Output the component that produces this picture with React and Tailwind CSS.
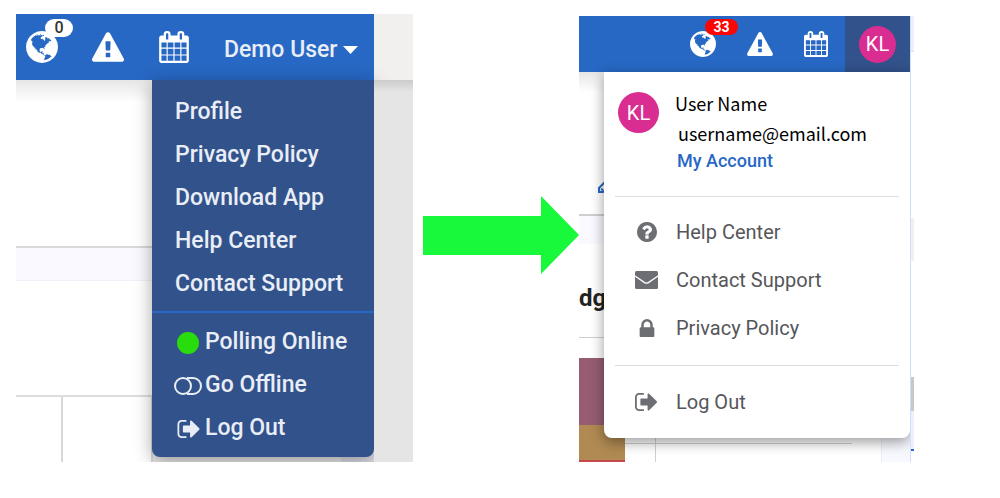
const GlobeIcon = ({ className }) => (
  <svg className={className} viewBox="128 128 1536 1536" fill="currentColor" aria-hidden="true">
    <path d="M896 128q209 0 385.5 103t279.5 279.5 103 385.5-103 385.5-279.5 279.5-385.5 103-385.5-103-279.5-279.5-103-385.5 103-385.5 279.5-279.5 385.5-103zm274 521q-2 1-9.5 9.5t-13.5 9.5q2 0 4.5-5t5-11 3.5-7q6-7 22-15 14-6 52-12 34-8 51 11-2-2 9.5-13t14.5-12q3-2 15-4.5t15-7.5l2-22q-12 1-17.5-7t-6.5-21q0 2-6 8 0-7-4.500-8t-11.5 1-9 1q-10-3-15-7.500t-8-16.500-4-15q-2-5-9.500-11t-9.500-10q-1-2-2.500-5.500t-3-6.500-4-5.500-5.500-2.500-7 5-7.500 10-4.500 5q-3-2-6-1.500t-4.500 1-4.500 3-5 3.500q-3 2-8.500 3t-8.500 2q15-5-1-11-10-4-16-3 9-4 7.500-12t-8.500-14h5q-1-4-8.500-8.500t-17.500-8.500-13-6q-8-5-34-9.500t-33-.5q-5 6-4.500 10.500t4 14 3.500 12.500q1 6-5.500 13t-6.500 12q0 7 14 15.500t10 21.500q-3 8-16 16t-16 12q-5 8-1.500 18.500t10.500 16.500q2 2 1.500 4t-3.500 4.500-5.500 4-6.500 3.500l-3 2q-11 5-20.500-6t-13.500-26q-7-25-16-30-23-8-29 1-5-13-41-26-25-9-58-4 6-1 0-15-7-15-19-12 3-6 4-17.500t1-13.500q3-13 12-23 1-1 7-8.500t9.500-13.500.5-6q35 4 50-11 5-5 11.500-17t10.500-17q9-6 14-5.500t14.500 5.500 14.500 5q14 1 15.500-11t-7.500-20q12 1 3-17-4-7-8-9-12-4-27 5-8 4 2 8-1-1-9.500 10.500t-16.500 17.500-16-5q-1-1-5.500-13.500t-9.500-13.500q-8 0-16 15 3-8-11-15t-24-8q19-12-8-27-7-4-20.500-5t-19.500 4q-5 7-5.500 11.500t5 8 10.500 5.500 11.500 4 8.500 3q14 10 8 14-2 1-8.500 3.500t-11.500 4.500-6 4q-3 4 0 14t-2 14q-5-5-9-17.500t-7-16.500q7 9-25 6l-10-1q-4 0-16 2t-20.500 1-13.500-8q-4-8 0-20 1-4 4-2-4-3-11-9.500t-10-8.500q-46 15-94 41 6 1 12-1 5-2 13-6.500t10-5.500q34-14 42-7l5-5q14 16 20 25-7-4-30-1-20 6-22 12 7 12 5 18-4-3-11.500-10t-14.500-11-15-5q-16 0-22 1-146 80-235 222 7 7 12 8 4 1 5 9t2.500 11 11.500-3q9 8 3 19 1-1 44 27 19 17 21 21 3 11-10 18-1-2-9-9t-9-4q-3 5 .5 18.500t10.500 12.500q-7 0-9.500 16t-2.500 35.500-1 23.500l2 1q-3 12 5.500 34.500t21.500 19.500q-13 3 20 43 6 8 8 9 3 2 12 7.500t15 10 10 10.500q4 5 10 22.500t14 23.500q-2 6 9.500 20t10.500 23q-1 0-2.500 1t-2.500 1q3 7 15.500 14t15.500 13q1 3 2 10t3 11 8 2q2-20-24-62-15-25-17-29-3-5-5.500-15.500t-4.500-14.500q2 0 6 1.500t8.500 3.500 7.500 4 2 3q-3 7 2 17.500t12 18.500 17 19 12 13q6 6 14 19.500t0 13.500q9 0 20 10t17 20q5 8 8 26t5 24q2 7 8.500 13.500t12.500 9.500l16 8 13 7q5 2 18.500 10.500t21.500 11.500q10 4 16 4t14.500-2.500 13.500-3.500q15-2 29 15t21 21q36 19 55 11-2 1 .5 7.500t8 15.500 9 14.500 5.500 8.500q5 6 18 15t18 15q6-4 7-9-3 8 7 20t18 10q14-3 14-32-31 15-49-18 0-1-2.500-5.500t-4-8.500-2.500-8.500 0-7.500 5-3q9 0 10-3.500t-2-12.500-4-13q-1-8-11-20t-12-15q-5 9-16 8t-16-9q0 1-1.500 5.500t-1.500 6.500q-13 0-15-1 1-3 2.500-17.500t3.500-22.500q1-4 5.500-12t7.500-14.500 4-12.500-4.500-9.500-17.500-2.500q-19 1-26 20-1 3-3 10.500t-5 11.500-9 7q-7 3-24 2t-24-5q-13-8-22.500-29t-9.500-37q0-10 2.500-26.500t3-25-5.500-24.500q3-2 9-9.500t10-10.500q2-1 4.500-1.500t4.500 0 4-1.500 3-6q-1-1-4-3-3-3-4-3 7 3 28.500-1.500t27.500 1.500q15 11 22-2 0-1-2.500-9.500t-.5-13.500q5 27 29 9 3 3 15.500 5t17.500 5q3 2 7 5.500t5.500 4.500 5-.5 8.500-6.500q10 14 12 24 11 40 19 44 7 3 11 2t4.500-9.500 0-14-1.500-12.500l-1-8v-18l-1-8q-15-3-18.500-12t1.500-18.500 15-18.500q1-1 8-3.500t15.500-6.500 12.500-8q21-19 15-35 7 0 11-9-1 0-5-3t-7.500-5-4.500-2q9-5 2-16 5-3 7.500-11t7.500-10q9 12 21 2 7-8 1-16 5-7 20.500-10.500t18.500-9.500q7 2 8-2t1-12 3-12q4-5 15-9t13-5l17-11q3-4 0-4 18 2 31-11 10-11-6-20 3-6-3-9.500t-15-5.500q3-1 11.500-.5t10.500-1.500q15-10-7-16-17-5-43 12zm-163 877q206-36 351-189-3-3-12.500-4.500t-12.500-3.500q-18-7-24-8 1-7-2.500-13t-8-9-12.500-8-11-7q-2-2-7-6t-7-5.500-7.500-4.500-8.500-2-10 1l-3 1q-3 1-5.500 2.500t-5.500 3-4 3 0 2.500q-21-17-36-22-5-1-11-5.500t-10.500-7-10-1.500-11.500 7q-5 5-6 15t-2 13q-7-5 0-17.500t2-18.500q-3-6-10.500-4.500t-12 4.500-11.500 8.500-9 6.500-8.500 5.500-8.500 7.500q-3 4-6 12t-5 11q-2-4-11.500-6.500t-9.500-5.500q2 10 4 35t5 38q7 31-12 48-27 25-29 40-4 22 12 26 0 7-8 20.500t-7 21.500q0 6 2 16z" />
  </svg>
);

const WarningIcon = ({ className }) => (
  <svg className={className} viewBox="0 0 1792 1664" fill="currentColor" aria-hidden="true">
    <path d="M1024 1375v-190q0-14-9.5-23.5t-22.5-9.5h-192q-13 0-22.5 9.5t-9.5 23.5v190q0 14 9.5 23.5t22.5 9.5h192q13 0 22.5-9.5t9.5-23.5zm-2-374l18-459q0-12-10-19-13-11-24-11h-220q-11 0-24 11-10 7-10 21l17 457q0 10 10 16.5t24 6.5h185q14 0 23.5-6.5t10.5-16.5zm-14-934l768 1408q35 63-2 126-17 29-46.5 46t-63.5 17h-1536q-34 0-63.5-17t-46.5-46q-37-63-2-126l768-1408q17-31 47-49t65-18 65 18 47 49z" />
  </svg>
);

const CalendarIcon = ({ className }) => (
  <svg className={className} viewBox="64 0 1664 1792" fill="currentColor" aria-hidden="true">
    <path d="M192 1664h288v-288h-288v288zm352 0h320v-288h-320v288zm-352-352h288v-320h-288v320zm352 0h320v-320h-320v320zm-352-384h288v-288h-288v288zm736 736h320v-288h-320v288zm-384-736h320v-288h-320v288zm768 736h288v-288h-288v288zm-384-352h320v-320h-320v320zm-352-864v-288q0-13-9.5-22.5t-22.5-9.5h-64q-13 0-22.5 9.5t-9.5 22.5v288q0 13 9.5 22.5t22.5 9.5h64q13 0 22.5-9.5t9.5-22.5zm736 864h288v-320h-288v320zm-384-384h320v-288h-320v288zm384 0h288v-288h-288v288zm32-480v-288q0-13-9.5-22.5t-22.5-9.5h-64q-13 0-22.5 9.5t-9.5 22.5v288q0 13 9.5 22.5t22.5 9.5h64q13 0 22.5-9.5t9.5-22.5zm384-64v1280q0 52-38 90t-90 38h-1408q-52 0-90-38t-38-90v-1280q0-52 38-90t90-38h128v-96q0-66 47-113t113-47h64q66 0 113 47t47 113v96h384v-96q0-66 47-113t113-47h64q66 0 113 47t47 113v96h128q52 0 90 38t38 90z" />
  </svg>
);

const SignOutIcon = ({ className }) => (
  <svg className={className} viewBox="64 256 1568 1280" fill="currentColor" aria-hidden="true">
    <path d="M704 1440q0 4 1 20t.5 26.5-3 23.5-10 19.5-20.5 6.5h-320q-119 0-203.5-84.5t-84.5-203.5v-704q0-119 84.5-203.5t203.5-84.5h320q13 0 22.5 9.5t9.5 22.5q0 4 1 20t.5 26.5-3 23.5-10 19.5-20.5 6.5h-320q-66 0-113 47t-47 113v704q0 66 47 113t113 47h312l11.5 1 11.5 3 8 5.5 7 9 2 13.5zm928-544q0 26-19 45l-544 544q-19 19-45 19t-45-19-19-45v-288h-448q-26 0-45-19t-19-45v-384q0-26 19-45t45-19h448v-288q0-26 19-45t45-19 45 19l544 544q19 19 19 45z" />
  </svg>
);

const HelpIcon = ({ className }) => (
  <svg className={className} viewBox="128 128 1536 1536" fill="currentColor" aria-hidden="true">
    <path d="M1024 1376v-192q0-14-9-23t-23-9h-192q-14 0-23 9t-9 23v192q0 14 9 23t23 9h192q14 0 23-9t9-23zm256-672q0-88-55.5-163t-138.5-116-170-41q-243 0-371 213-15 24 8 42l132 100q7 6 19 6 16 0 25-12 53-68 86-92 34-24 86-24 48 0 85.5 26t37.5 59q0 38-20 61t-68 45q-63 28-115.5 86.5t-52.5 125.5v36q0 14 9 23t23 9h192q14 0 23-9t9-23q0-19 21.5-49.5t54.5-49.5q32-18 49-28.5t46-35 44.5-48 28-60.5 12.5-81zm384 192q0 209-103 385.5t-279.5 279.5-385.5 103-385.5-103-279.5-279.5-103-385.5 103-385.5 279.5-279.5 385.5-103 385.5 103 279.5 279.5 103 385.5z" />
  </svg>
);

const MailIcon = ({ className }) => (
  <svg className={className} viewBox="0 0 23 18" aria-hidden="true">
    <rect width="23" height="18" rx="1.5" fill="currentColor" />
    <path d="M0 5l9.6 6.600q1.900 1.200 3.800 0L23 5" fill="none" stroke="#fff" strokeWidth="1.3" />
  </svg>
);

const LockIcon = ({ className }) => (
  <svg className={className} viewBox="320 128 1152 1408" fill="currentColor" aria-hidden="true">
    <path d="M640 768h512v-192q0-106-75-181t-181-75-181 75-75 181v192zm832 96v576q0 40-28 68t-68 28h-960q-40 0-68-28t-28-68v-576q0-40 28-68t68-28h32v-192q0-184 132-316t316-132 316 132 132 316v192h32q40 0 68 28t28 68z" />
  </svg>
);

const ToggleOffIcon = ({ className }) => (
  <svg className={className} viewBox="0 0 28 18" fill="none" stroke="currentColor" strokeWidth="2" aria-hidden="true">
    <circle cx="9" cy="9" r="8" />
    <path d="M13 1h6a8 8 0 0 1 0 16h-6" />
  </svg>
);

const OnlineIcon = ({ className }) => (
  <svg className={className} viewBox="0 0 22 22" aria-hidden="true">
    <circle cx="11" cy="11" r="11" fill="#28dd0b" />
  </svg>
);

const oldLinks = ['Profile', 'Privacy Policy', 'Download App', 'Help Center', 'Contact Support'];

const oldActions = [
  { label: 'Polling Online', Icon: OnlineIcon, size: 'w-[22px] h-[22px]' },
  { label: 'Go Offline', Icon: ToggleOffIcon, size: 'w-7 h-[18px]' },
  { label: 'Log Out', Icon: SignOutIcon, size: 'w-[23px] h-[18px]' },
];

const newLinks = [
  { label: 'Help Center', Icon: HelpIcon, size: 'w-5 h-5' },
  { label: 'Contact Support', Icon: MailIcon, size: 'w-[23px] h-[18px]' },
  { label: 'Privacy Policy', Icon: LockIcon, size: 'w-4 h-[18px]' },
];

const OldMenu = () => (
  <nav className="absolute top-full right-0 w-[222px] pt-[11px] pb-[7px] rounded-b-lg bg-[#32528b] text-[#e9eef6] text-[23px] font-medium shadow-[0_4px_18px_rgba(0,0,0,0.35)]">
    <ul>
      {oldLinks.map((label) => (
        <li key={label}>
          <a href="#" className="flex items-center h-[43px] pl-[23px] whitespace-nowrap">{label}</a>
        </li>
      ))}
    </ul>
    <hr className="mt-[5px] mb-2 border-t-2 border-[#2768c4]" />
    <ul>
      {oldActions.map(({ label, Icon, size }) => (
        <li key={label}>
          <button type="button" className="flex items-center w-full h-[43px] pl-[22px] whitespace-nowrap">
            <span className="w-[31px] flex justify-start">
              <span className="w-7 flex justify-center">
                <Icon className={size} />
              </span>
            </span>
            {label}
          </button>
        </li>
      ))}
    </ul>
  </nav>
);

const OldPanel = () => (
  <section className="relative overflow-hidden bg-white">
    <div className="flex">
      <header className="relative z-10 flex-1 flex items-center gap-[34px] h-[66px] pl-[10px] bg-[#2768c4] text-white">
        <button type="button" aria-label="Language" className="relative">
          <GlobeIcon className="w-8 h-8" />
          <span className="absolute -top-3 left-[19px] w-7 h-[18px] rounded-full bg-white text-[#333] text-base leading-[18px] font-medium text-center">0</span>
        </button>
        <button type="button" aria-label="Alerts">
          <WarningIcon className="w-8 h-[30px]" />
        </button>
        <button type="button" aria-label="Calendar" className="w-8 flex justify-center">
          <CalendarIcon className="w-[30px] h-8" />
        </button>
        <button type="button" className="flex items-center gap-[6px] pt-[6px] text-[23px] font-medium whitespace-nowrap text-[#e9eef6]">
          Demo User
          <svg className="w-[15px] h-2" viewBox="0 0 15 8" fill="#fff" aria-hidden="true">
            <path d="M0 0h15L7.500 8z" />
          </svg>
        </button>
        <OldMenu />
      </header>
      <div className="w-[39px] bg-[#f2f0ef]" />
    </div>

    {/* page behind the menu */}
    <div className="flex">
      <div className="flex-1">
        <div className="h-[168px] border-b-2 border-[#d9d9d9] bg-linear-to-b from-[#e6e6e6] to-white to-[22px]" />
        <div className="h-[33px] border-b border-[#f0f0f8] bg-[#f9f9ff]" />
        <div className="h-[116px] border-b-2 border-[#dddddd]" />
        <div className="flex h-[65px]">
          <div className="w-[47px] border-r-2 border-[#d8d8d8]" />
          <div className="w-[90px] border-r-2 border-[#d8d8d8]" />
          <div className="flex-1 bg-[#e8e8e8]" />
          <div className="w-[33px] bg-[#dcdce6]" />
        </div>
      </div>
      <div className="relative z-10 w-[39px] bg-linear-to-b from-[#cccccc] to-[#e5e5e5] to-[12px]" />
    </div>
  </section>
);

const NewMenu = () => (
  <nav className="absolute top-full right-0 w-[306px] px-[11px] rounded-b-lg bg-white text-xl text-[#55565a] shadow-[0_4px_14px_rgba(0,0,0,0.4)]">
    <div className="flex h-[124px] pt-5 pl-[3px]">
      <span className="flex items-center justify-center w-[41px] h-[41px] rounded-full bg-[#d92d91] text-white">KL</span>
      <div className="pl-4 font-['Noto_Sans_CJK_SC',sans-serif] text-lg text-black leading-[30px]">
        <p className="-mt-1">User Name</p>
        <p className="pl-[3px]">username@email.com</p>
        <a href="#" className="block pl-[2px] font-[Roboto,sans-serif] font-medium leading-[26px] text-[#2768c4]">My Account</a>
      </div>
    </div>
    <hr className="border-[#dedede]" />
    <ul className="pt-[11px] pb-[13px]">
      {newLinks.map(({ label, Icon, size }) => (
        <li key={label}>
          <a href="#" className="flex items-center h-12 text-[#55565a]">
            <span className="w-[61px] pl-5 flex">
              <span className="w-[23px] flex justify-center text-[#6d6e73]">
                <Icon className={size} />
              </span>
            </span>
            {label}
          </a>
        </li>
      ))}
    </ul>
    <hr className="border-[#dedede]" />
    <button type="button" className="flex items-center w-full h-[72px]">
      <span className="w-[61px] pl-5 flex text-[#6d6e73]">
        <SignOutIcon className="w-[22px] h-[18px]" />
      </span>
      Log Out
    </button>
  </nav>
);

const NewPanel = () => (
  <section className="relative mt-[2px] flex overflow-hidden bg-white">
    <div className="flex-1">
      <header className="relative z-10 flex items-center justify-end h-14 bg-[#2768c4] text-white">
        <div className="flex items-center gap-[31px] pr-[17px]">
          <button type="button" aria-label="Language" className="relative">
            <GlobeIcon className="w-[26px] h-[26px]" />
            <span className="absolute -top-3 left-[15px] w-[33px] h-4 rounded-full bg-[#fb0606] text-white text-sm leading-4 font-bold text-center">33</span>
          </button>
          <button type="button" aria-label="Alerts">
            <WarningIcon className="w-[26px] h-6" />
          </button>
          <button type="button" aria-label="Calendar">
            <CalendarIcon className="w-6 h-[26px]" />
          </button>
        </div>
        <button type="button" aria-label="Account" className="flex items-center justify-center w-[65px] h-full bg-[#32528b]">
          <span className="flex items-center justify-center w-[37px] h-[37px] rounded-full bg-[#d92d91] text-xl">KL</span>
        </button>
        <NewMenu />
      </header>

      {/* page behind the menu */}
      <div className="flex items-end h-[144px] pl-[19px] pb-[21px] border-b-2 border-[#cfcfd3] bg-linear-to-b from-[#e6e6e6] to-white to-[20px]">
        <svg className="w-3 h-3" viewBox="0 0 12 12" fill="none" stroke="#2768c4" strokeWidth="2" aria-hidden="true">
          <path d="M7 1L1 7v4h4l6-6M3 8l2 1" />
        </svg>
      </div>
      <div className="h-7 bg-[#f9f9ff]" />
      <h2 className="flex items-center h-[94px] pt-[15px] border-b border-[#cfcfcf] text-2xl font-bold text-[#222]">dge</h2>
      <div className="flex h-[124px]">
        <div className="w-[46px] flex flex-col pt-5">
          <div className="h-[67px] bg-[#965d72]" />
          <div className="h-[35px] bg-[#b08a52]" />
          <div className="h-[2px] bg-[#c5484e]" />
        </div>
        <div className="w-[30px] h-[106px] border-b border-[#cfcfcf]" />
        <div className="flex-1 border-l border-[#cfcfcf]">
          <div className="h-[106px] border-b border-[#cfcfcf]" />
        </div>
        <div className="w-[29px]" />
        <div className="w-[29px] border-l border-[#ececf4] bg-[#f8f9ff]" />
      </div>
    </div>

    <div className="relative z-10 w-1 border-l border-[#cfdefb] bg-white">
      <div className="h-9 bg-[#efeffa] border-b border-[#d5dffa]" />
      <div className="mt-[166px] h-[43px] bg-[#f1eff5]" />
      <div className="mt-[116px] h-[34px] bg-[#c8c8c8]" />
      <div className="h-[38px] bg-[#efeffa]" />
      <div className="h-[2px] bg-[#2768e4]" />
    </div>
  </section>
);

const App = () => {
  return (
    <main className="grid grid-cols-[397fr_166fr_335fr_86fr] items-start pl-4 pt-[14px] bg-white font-[Roboto,sans-serif]">
      <OldPanel />
      <div className="relative z-20 pt-[182px] pl-[10px]">
        <svg className="block w-full" viewBox="0 0 156 78" fill="#17f93a" role="img" aria-label="becomes">
          <path d="M0 20h118V0l38 39-38 39V59H0z" />
        </svg>
      </div>
      <NewPanel />
    </main>
  );
};

export default App;
